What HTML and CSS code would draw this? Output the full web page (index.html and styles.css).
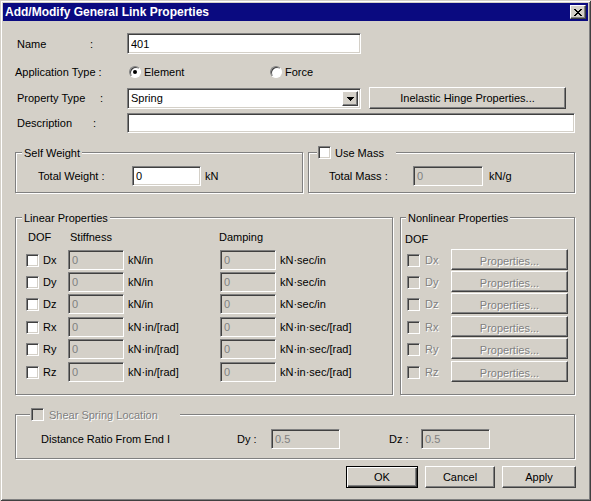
FILE: index.html
```html
<!DOCTYPE html>
<html lang="en">
<head>
    <meta charset="UTF-8">
    <title>Add/Modify General Link Properties</title>
    <link rel="stylesheet" href="styles.css">
</head>
<body>
<div class="window">
    <div class="titlebar">
        <span class="title">Add/Modify General Link Properties</span>
        <button class="close-btn" type="button">
            <svg width="8" height="7" viewBox="0 0 8 7" shape-rendering="crispEdges"><path d="M0 0h2v1H0z M6 0h2v1H6z M1 1h2v1H1z M5 1h2v1H5z M2 2h4v1H2z M3 3h2v1H3z M2 4h4v1H2z M1 5h2v1H1z M5 5h2v1H5z M0 6h2v1H0z M6 6h2v1H6z" fill="#000"/></svg>
        </button>
    </div>

    <div class="row row-name">
        <span class="field"><span class="key key-name">Name</span>:</span>
        <input class="edit edit-name" type="text" value="401">
    </div>
    <div class="row row-app">
        <span class="field-app">Application Type :</span>
        <label class="opt opt-element"><span class="radio on"></span>Element</label>
        <label class="opt"><span class="radio"></span>Force</label>
    </div>
    <div class="row row-prop">
        <span class="field"><span class="key key-prop">Property Type</span>:</span>
        <div class="combo">
            <span class="combo-text">Spring</span>
            <span class="drop">
                <svg width="7" height="4" viewBox="0 0 7 4" shape-rendering="crispEdges"><path d="M0 0h7v1H0z M1 1h5v1H1z M2 2h3v1H2z M3 3h1v1H3z" fill="#000"/></svg>
            </span>
        </div>
        <button class="btn btn-hinge" type="button">Inelastic Hinge Properties...</button>
    </div>
    <div class="row row-desc">
        <span class="field"><span class="key key-desc">Description</span>:</span>
        <input class="edit edit-desc" type="text">
    </div>

    <div class="groups groups-top">
        <div class="group group-weight">
            <div class="legend lg-weight">Self Weight</div>
            <div class="group-line line-weight">
                <span class="lbl-weight">Total Weight :</span>
                <input class="edit edit-weight" type="text" value="0">
                <span class="unit-kn">kN</span>
            </div>
        </div>
        <div class="group group-mass">
            <div class="legend lg-mass"><span class="check"></span>Use Mass</div>
            <div class="group-line line-mass">
                <span class="lbl-mass">Total Mass :</span>
                <input class="edit edit-mass" type="text" value="0" disabled>
                <span class="unit-kng">kN/g</span>
            </div>
        </div>
    </div>

    <div class="groups groups-mid">
        <div class="group group-linear">
            <div class="legend lg-linear">Linear Properties</div>
            <div class="lin-head">
                <span class="h-dof">DOF</span>
                <span class="h-stiff">Stiffness</span>
                <span>Damping</span>
            </div>
            <div class="lin-row"><span class="check"></span><span class="dof">Dx</span><input class="edit edit-val" value="0" disabled><span class="unit">kN/in</span><input class="edit edit-val" value="0" disabled><span class="unit">kN·sec/in</span></div>
            <div class="lin-row"><span class="check"></span><span class="dof">Dy</span><input class="edit edit-val" value="0" disabled><span class="unit">kN/in</span><input class="edit edit-val" value="0" disabled><span class="unit">kN·sec/in</span></div>
            <div class="lin-row tall"><span class="check"></span><span class="dof">Dz</span><input class="edit edit-val" value="0" disabled><span class="unit">kN/in</span><input class="edit edit-val" value="0" disabled><span class="unit">kN·sec/in</span></div>
            <div class="lin-row"><span class="check"></span><span class="dof">Rx</span><input class="edit edit-val" value="0" disabled><span class="unit">kN·in/[rad]</span><input class="edit edit-val" value="0" disabled><span class="unit">kN·in·sec/[rad]</span></div>
            <div class="lin-row tall"><span class="check"></span><span class="dof">Ry</span><input class="edit edit-val" value="0" disabled><span class="unit">kN·in/[rad]</span><input class="edit edit-val" value="0" disabled><span class="unit">kN·in·sec/[rad]</span></div>
            <div class="lin-row"><span class="check"></span><span class="dof">Rz</span><input class="edit edit-val" value="0" disabled><span class="unit">kN·in/[rad]</span><input class="edit edit-val" value="0" disabled><span class="unit">kN·in·sec/[rad]</span></div>
        </div>
        <div class="group group-nonlinear">
            <div class="legend lg-nonlinear">Nonlinear Properties</div>
            <div class="nl-head">DOF</div>
            <div class="nl-row"><span class="check off"></span><span class="dof dis">Dx</span><button class="btn btn-prop" type="button" disabled>Properties...</button></div>
            <div class="nl-row"><span class="check off"></span><span class="dof dis">Dy</span><button class="btn btn-prop" type="button" disabled>Properties...</button></div>
            <div class="nl-row tall"><span class="check off"></span><span class="dof dis">Dz</span><button class="btn btn-prop" type="button" disabled>Properties...</button></div>
            <div class="nl-row"><span class="check off"></span><span class="dof dis">Rx</span><button class="btn btn-prop" type="button" disabled>Properties...</button></div>
            <div class="nl-row tall"><span class="check off"></span><span class="dof dis">Ry</span><button class="btn btn-prop" type="button" disabled>Properties...</button></div>
            <div class="nl-row"><span class="check off"></span><span class="dof dis">Rz</span><button class="btn btn-prop" type="button" disabled>Properties...</button></div>
        </div>
    </div>

    <div class="group group-shear">
        <div class="legend lg-shear"><span class="check off"></span><span class="dis">Shear Spring Location</span></div>
        <div class="group-line line-shear">
            <span class="lbl-ratio">Distance Ratio From End I</span>
            <span class="lbl-dy">Dy :</span>
            <input class="edit edit-ratio" type="text" value="0.5" disabled>
            <span class="lbl-dz">Dz :</span>
            <input class="edit edit-ratio" type="text" value="0.5" disabled>
        </div>
    </div>

    <div class="footer">
        <button class="btn btn-ok" type="button">OK</button>
        <button class="btn btn-cancel" type="button">Cancel</button>
        <button class="btn btn-apply" type="button">Apply</button>
    </div>
</div>
</body>
</html>
```

FILE: styles.css
```css
*{
    margin: 0;
    padding: 0;
    box-sizing: border-box;
}
body{
    background-color: #d4d0c8;
    font-family: "Liberation Sans", Arial, sans-serif;
    font-size: 11px;
    color: #000;
}
.window{
    width: 591px;
    height: 501px;
    overflow: hidden;
    background-color: #d4d0c8;
    box-shadow: inset 1px 1px #d4d0c8, inset -1px -1px #404040, inset 2px 2px #fff, inset -2px -2px #808080;
}
.titlebar{
    display: flex;
    align-items: center;
    height: 18px;
    margin: 3px 3px 0;
    padding: 0 2px;
    background-color: #0a0a80;
    color: #fff;
}
.title{
    flex: 1;
    font-size: 12px;
    font-weight: bold;
}
.close-btn{
    display: flex;
    align-items: center;
    justify-content: center;
    width: 16px;
    height: 14px;
    background-color: #d4d0c8;
    border: 1px solid;
    border-color: #fff #404040 #404040 #fff;
    box-shadow: inset -1px -1px #808080;
}

/* controls */
.edit{
    height: 21px;
    padding: 0 3px;
    font: inherit;
    color: #000;
    background-color: #fff;
    border: 1px solid;
    border-color: #808080 #fff #fff #808080;
    box-shadow: inset 1px 1px #404040, inset -1px -1px #d4d0c8;
    outline: none;
}
.edit:disabled{
    background-color: #d4d0c8;
    color: #808080;
    -webkit-text-fill-color: #808080;
    opacity: 1;
}
.btn{
    font: inherit;
    color: #000;
    background-color: #d4d0c8;
    border: 1px solid;
    border-color: #fff #404040 #404040 #fff;
    box-shadow: inset -1px -1px #808080;
    height: 22px;
}
.btn:disabled{
    color: #808080;
    text-shadow: 1px 1px #fff;
}
.check{
    display: inline-block;
    flex: none;
    width: 13px;
    height: 13px;
    background-color: #fff;
    border: 1px solid;
    border-color: #808080 #fff #fff #808080;
    box-shadow: inset 1px 1px #404040, inset -1px -1px #d4d0c8;
}
.check.off{
    background-color: #d4d0c8;
}
.radio{
    display: flex;
    align-items: center;
    justify-content: center;
    flex: none;
    width: 12px;
    height: 12px;
    border-radius: 50%;
    background-color: #fff;
    border: 1px solid;
    border-color: #808080 #fff #fff #808080;
    box-shadow: inset 1px 1px #404040;
}
.radio.on::after{
    content: "";
    width: 4px;
    height: 4px;
    border-radius: 50%;
    background-color: #000;
}
.dis{
    color: #808080;
    text-shadow: 1px 1px #fff;
}

/* top rows */
.row{
    display: flex;
    align-items: center;
}
.field{
    display: flex;
    width: 110px;
}
.key{
    display: inline-block;
}
.key-name{ width: 73px; }
.key-prop{ width: 83px; }
.key-desc{ width: 76px; }
.row-name{
    height: 21px;
    margin-top: 12px;
    padding-left: 17px;
}
.edit-name{
    width: 234px;
}
.row-app{
    height: 16px;
    margin-top: 10px;
    padding-left: 15px;
}
.field-app{
    width: 114px;
}
.opt{
    display: flex;
    align-items: center;
    gap: 3px;
}
.opt-element{
    width: 141px;
}
.row-prop{
    height: 22px;
    margin-top: 7px;
    padding-left: 17px;
}
.combo{
    display: flex;
    align-self: flex-start;
    width: 234px;
    height: 21px;
    margin-top: 1px;
    padding: 2px;
    background-color: #fff;
    border: 1px solid;
    border-color: #808080 #fff #fff #808080;
    box-shadow: inset 1px 1px #404040, inset -1px -1px #d4d0c8;
}
.combo-text{
    flex: 1;
    line-height: 15px;
    padding-left: 1px;
}
.drop{
    display: flex;
    align-items: center;
    justify-content: center;
    width: 16px;
    height: 15px;
    background-color: #d4d0c8;
    border: 1px solid;
    border-color: #fff #404040 #404040 #fff;
    box-shadow: inset -1px -1px #808080;
}
.btn-hinge{
    width: 197px;
    margin-left: 8px;
}
.row-desc{
    height: 20px;
    margin-top: 4px;
    padding-left: 17px;
}
.edit-desc{
    width: 448px;
    height: 20px;
}

/* group boxes */
.groups{
    display: flex;
    padding-left: 15px;
}
.group{
    border: 1px solid #808080;
    box-shadow: inset 1px 1px #fff, 1px 1px #fff;
}
.legend{
    display: flex;
    align-items: center;
    gap: 4px;
    width: max-content;
    height: 15px;
    margin: -8px 0 0 6px;
    padding: 0 2px;
    background-color: #d4d0c8;
}
.group-line{
    display: flex;
    align-items: center;
    height: 20px;
}
.groups-top{
    margin-top: 19px;
    gap: 5px;
}
.group-weight{
    width: 288px;
    height: 41px;
}
.line-weight{
    margin-top: 6px;
    padding-left: 22px;
}
.lbl-weight{
    width: 94px;
}
.edit-weight{
    width: 69px;
    height: 20px;
}
.unit-kn{
    margin-left: 4px;
}
.group-mass{
    width: 267px;
    height: 41px;
}
.lg-mass{
    margin-left: 8px;
    padding: 0 12px 0 1px;
}
.line-mass{
    margin-top: 6px;
    padding-left: 20px;
}
.lbl-mass{
    width: 84px;
}
.edit-mass{
    width: 70px;
    height: 20px;
}
.unit-kng{
    margin-left: 6px;
}

/* linear / nonlinear */
.groups-mid{
    margin-top: 24px;
    gap: 7px;
}
.group-linear{
    width: 378px;
    height: 178px;
}
.lin-head{
    display: flex;
    height: 14px;
    line-height: 14px;
    margin: 5px 0 5px;
    padding-left: 12px;
}
.h-dof{
    width: 42px;
}
.h-stiff{
    width: 149px;
}
.lin-row,
.nl-row{
    display: flex;
    align-items: flex-start;
    height: 22px;
    line-height: 22px;
}
.lin-row.tall,
.nl-row.tall{
    height: 23px;
}
.lin-row{
    padding-left: 10px;
}
.lin-row .check{
    margin: 5px 4px 0 0;
}
.lin-row .dof{
    width: 25px;
}
.edit-val{
    width: 56px;
    height: 20px;
    margin-top: 1px;
}
.unit{
    width: 96px;
    padding-left: 4px;
}
.group-nonlinear{
    width: 175px;
    height: 178px;
}
.lg-nonlinear{
    margin-left: 5px;
}
.nl-head{
    height: 14px;
    line-height: 14px;
    margin: 7px 0 3px;
    padding-left: 4px;
}
.nl-row{
    padding-left: 6px;
}
.nl-row .check{
    margin: 5px 5px 0 0;
}
.nl-row .dof{
    width: 26px;
}
.btn-prop{
    width: 117px;
    height: 21px;
}

/* shear spring */
.group-shear{
    width: 560px;
    height: 45px;
    margin: 19px 0 0 15px;
}
.lg-shear{
    width: 150px;
    margin-left: 14px;
    padding: 0 0 0 1px;
    gap: 5px;
}
.line-shear{
    margin-top: 7px;
    padding-left: 25px;
}
.lbl-ratio{
    width: 196px;
}
.lbl-dy{
    width: 34px;
}
.lbl-dz{
    width: 32px;
    margin-left: 49px;
}
.edit-ratio{
    width: 69px;
    height: 20px;
}

/* dialog buttons */
.footer{
    display: flex;
    justify-content: flex-end;
    gap: 7px;
    margin-top: 7px;
    padding-right: 15px;
}
.btn-ok{
    width: 72px;
    border-color: #000;
    box-shadow: inset 1px 1px #fff, inset -1px -1px #404040, inset -2px -2px #808080;
}
.btn-cancel{
    width: 70px;
}
.btn-apply{
    width: 74px;
}
```
